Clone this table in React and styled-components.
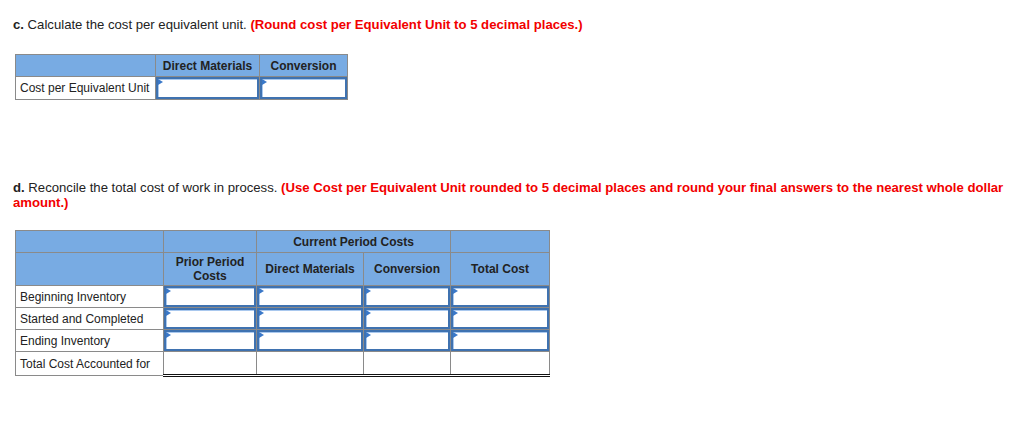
import styled, { createGlobalStyle } from "styled-components"

const GlobalStyle = createGlobalStyle`
  body {
    margin: 0;
    background: #fff;
    font-family: "Liberation Sans", Arial, sans-serif;
    color: #222;
  }
`

const Page = styled.div`
  padding: 17px 16px 0 13px;
  width: 1024px;
  box-sizing: border-box;
`

const Prompt = styled.p`
  margin: ${p => p.$mt || 0}px 0 0;
  font-size: 13.15px;
  line-height: 15px;
  b { font-weight: bold; }
  .note {
    color: #f20000;
    font-weight: bold;
  }
`

const Table = styled.table`
  border-collapse: collapse;
  margin: ${p => p.$mt}px 0 0 2px;
  font-size: 12px;
  table-layout: fixed;
  td, th {
    padding: 0;
  }
`

const Head = styled.th`
  background: #78abe3;
  border: 1px solid #8a8a8a;
  font-weight: bold;
  color: #222;
  text-align: center;
  height: ${p => p.$h || 21}px;
  line-height: 14px;
  vertical-align: middle;
`

const Label = styled.td`
  border: 1px solid #8a8a8a;
  padding: 0 4px !important;
  height: ${p => p.$h || 21}px;
  white-space: nowrap;
  text-align: left;
`

const Cell = styled.td`
  border: 1px solid #8a8a8a;
  height: ${p => p.$h || 21}px;
  padding: 0;
  position: relative;
  ${p => p.$total && `
    border-top: none;
    border-left-color: #b0b0b0;
    border-bottom: 3px double #111;
  `}
`

const Input = styled.div`
  position: absolute;
  inset: 0;
  border: 2px solid #3f72b0;
  box-shadow: inset 1px 1px 0 #a9c8ee;
  background: #fff;
  &::before {
    content: "";
    position: absolute;
    left: 0;
    top: 0;
    border-left: 5px solid #3a78c8;
    border-top: 3px solid transparent;
    border-bottom: 3px solid transparent;
  }
`

const Entry = ({ h }) => (
  <Cell $h={h}>
    <Input />
  </Cell>
)

const rows2 = ["Beginning Inventory", "Started and Completed", "Ending Inventory"]

export default function App() {
  return (
    <Page>
      <GlobalStyle />
      <Prompt>
        <b>c.</b> Calculate the cost per equivalent unit.{" "}
        <span className="note">(Round cost per Equivalent Unit to 5 decimal places.)</span>
      </Prompt>

      <Table $mt={22}>
        <colgroup>
          <col style={{ width: 140 }} />
          <col style={{ width: 104 }} />
          <col style={{ width: 88 }} />
        </colgroup>
        <thead>
          <tr>
            <Head></Head>
            <Head>Direct Materials</Head>
            <Head>Conversion</Head>
          </tr>
        </thead>
        <tbody>
          <tr>
            <Label $h={22}>Cost per Equivalent Unit</Label>
            <Entry h={22} />
            <Entry h={22} />
          </tr>
        </tbody>
      </Table>

      <Prompt $mt={80}>
        <b>d.</b> Reconcile the total cost of work in process.{" "}
        <span className="note">
          (Use Cost per Equivalent Unit rounded to 5 decimal places and round your final answers to the nearest whole dollar amount.)
        </span>
      </Prompt>

      <Table $mt={20}>
        <colgroup>
          <col style={{ width: 148 }} />
          <col style={{ width: 93 }} />
          <col style={{ width: 107 }} />
          <col style={{ width: 87 }} />
          <col style={{ width: 99 }} />
        </colgroup>
        <thead>
          <tr>
            <Head $h={21}></Head>
            <Head></Head>
            <Head colSpan={2}>Current Period Costs</Head>
            <Head></Head>
          </tr>
          <tr>
            <Head $h={32}></Head>
            <Head>Prior Period<br />Costs</Head>
            <Head>Direct Materials</Head>
            <Head>Conversion</Head>
            <Head>Total Cost</Head>
          </tr>
        </thead>
        <tbody>
          {rows2.map(r => (
            <tr key={r}>
              <Label>{r}</Label>
              <Entry />
              <Entry />
              <Entry />
              <Entry />
            </tr>
          ))}
          <tr>
            <Label $h={22}>Total Cost Accounted for</Label>
            <Cell $total $h={22} />
            <Cell $total $h={22} />
            <Cell $total $h={22} />
            <Cell $total $h={22} />
          </tr>
        </tbody>
      </Table>
    </Page>
  )
}
